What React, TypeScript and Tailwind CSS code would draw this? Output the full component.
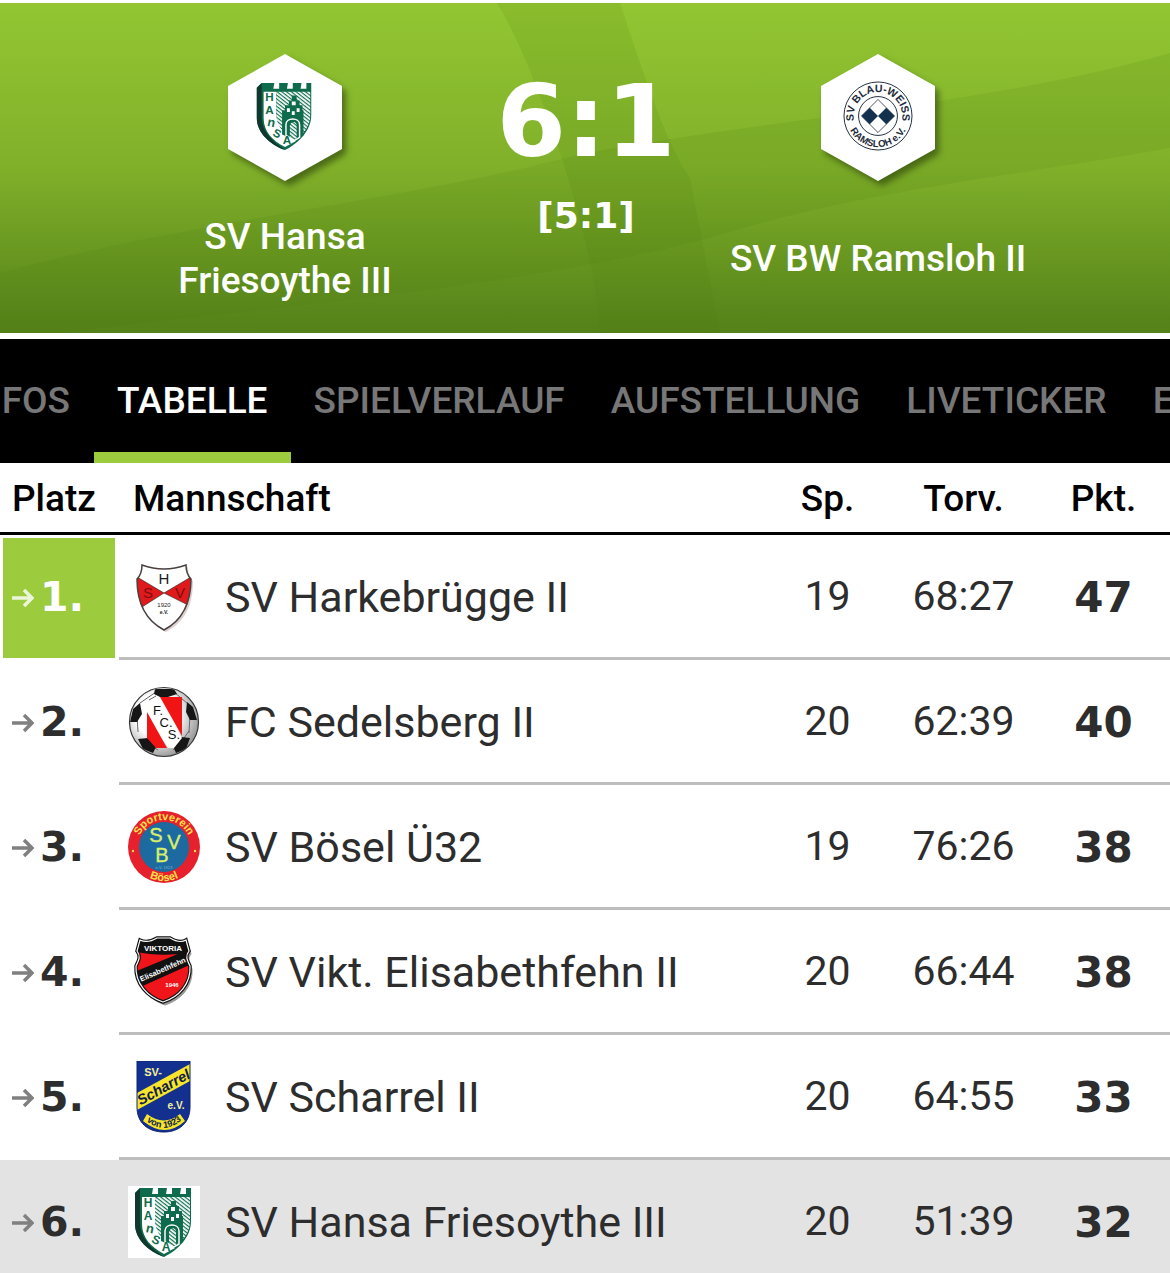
import type { ReactNode } from 'react';

type Team = {
  place: number;
  name: string;
  played: number;
  goals: string;
  points: number;
  crest: ReactNode;
};

const tabs = ['TABELLE', 'SPIELVERLAUF', 'AUFSTELLUNG', 'LIVETICKER', 'E'];

function HansaCrest({ className }: { className: string }) {
  return (
    <svg viewBox="0 0 72 72" className={className} aria-hidden>
      <defs>
        <pattern id="hatch" width="3" height="3" patternUnits="userSpaceOnUse" patternTransform="rotate(38)">
          <rect width="3" height="3" fill="#fff" />
          <rect width="3" height="1.2" fill="#12704f" />
        </pattern>
      </defs>
      <path d="M12 2H63V35C63 51 50 64 36 71C20 65 7 53 7 38V7Z" fill="#0e6b4b" />
      <path d="M7 7L12 2V38C13 54 25 63 36 71C20 65 7 53 7 38Z" fill="#10382f" />
      <path d="M14 11H27V34C28 48 38 56 47 62L36 68C23 61 14 52 14 38Z" fill="#fff" />
      <path d="M27 11H62V35C62 47 54 56 46 61C34 54 27 46 27 34Z" fill="url(#hatch)" />
      <path d="M33 55V30H36V25H40V20H43V15H48V20H51V25H54V30H55V56L47 61Z" fill="#0e6b4b" />
      <path d="M37 56V45C37 37 51 37 51 45V58L46 61Z" fill="#0e6b4b" stroke="#fff" strokeWidth="1.5" />
      <path d="M41 57V46C42 41 48 41 48 46V59L46 60Z" fill="url(#hatch)" />
      <g fill="#fff">
        <path d="M25 2H30V8H24ZM39 2H44V8H38ZM53 2H58V8H52Z" />
        <path d="M43 21H47V25H43ZM38 28H41V32H38ZM48 28H51V32H48ZM43 31H46V35H43Z" />
      </g>
      <g fill="#0e6b4b" fontFamily="Liberation Sans" fontWeight="700" fontSize="12" textAnchor="middle">
        <text x="20" y="21">H</text>
        <text x="20" y="34">A</text>
        <text x="22" y="47" fontSize="13" transform="rotate(12 22 43)">n</text>
        <text x="28" y="58" transform="rotate(24 28 54)">S</text>
        <text x="38" y="65">A</text>
      </g>
    </svg>
  );
}

function RamslohCrest({ className }: { className: string }) {
  return (
    <svg viewBox="0 0 72 72" className={className} aria-hidden>
      <defs>
        <path id="ramslohTop" d="M12.5 45A25 25 0 1 1 59.5 45" />
        <path id="ramslohBottom" d="M4 36A32 32 0 0 0 68 36" />
      </defs>
      <g fill="none" stroke="#1d2b3c">
        <circle cx="36" cy="36" r="35" />
        <circle cx="36" cy="36" r="20" />
      </g>
      <path d="M36 19L53 36L36 53L19 36Z" fill="#fff" stroke="#1d2b3c" strokeWidth="0.8" />
      <path d="M27.5 27.5L36 36L27.5 44.5L19 36ZM44.5 27.5L53 36L44.5 44.5L36 36Z" fill="#14304f" />
      <g fill="#1d2b3c" fontFamily="Liberation Sans" fontWeight="700" textAnchor="middle">
        <text fontSize="11">
          <textPath href="#ramslohTop" startOffset="50%">SV BLAU-WEISS</textPath>
        </text>
        <text fontSize="10">
          <textPath href="#ramslohBottom" startOffset="50%">RAMSLOH e.V.</textPath>
        </text>
      </g>
    </svg>
  );
}

function HarkebrueggeCrest() {
  return (
    <svg viewBox="0 0 72 72" className="size-18" aria-hidden>
      <defs>
        <clipPath id="hsvShield">
          <path d="M14 4C28 9 44 9 58 4C58 10 60 15 63 18C63 45 53 60 36 69C19 60 9 45 9 18C12 15 14 10 14 4Z" />
        </clipPath>
      </defs>
      <path d="M17 6C30 11 45 11 60 6C60 12 62 17 65 20C65 47 55 62 38 71C21 62 11 47 11 20Z" fill="#ddd0d0" />
      <g clipPath="url(#hsvShield)">
        <rect width="72" height="72" fill="#fff" />
        <path d="M9 16L36 32L63 16V43H58L36 32L14 46L9 43Z" fill="#e0191c" stroke="#222" strokeWidth="0.6" />
      </g>
      <path
        d="M14 4C28 9 44 9 58 4C58 10 60 15 63 18C63 45 53 60 36 69C19 60 9 45 9 18C12 15 14 10 14 4Z"
        fill="none"
        stroke="#4a4040"
        strokeWidth="1.5"
      />
      <g fill="#1c1c1c" fontFamily="Liberation Sans" textAnchor="middle">
        <text x="36" y="23" fontSize="15">H</text>
        <text x="20" y="37" fontSize="15" fill="#7c0f10">S</text>
        <text x="52" y="37" fontSize="15" fill="#7c0f10">V</text>
        <text x="36" y="46" fontSize="6">1920</text>
        <text x="36" y="53" fontSize="5" fontWeight="700">e.V.</text>
      </g>
    </svg>
  );
}

function SedelsbergCrest() {
  return (
    <svg viewBox="0 0 72 72" className="size-18" aria-hidden>
      <defs>
        <radialGradient id="ball" cx="40%" cy="40%" r="62%">
          <stop offset="0.5" stopColor="#fff" />
          <stop offset="1" stopColor="#9a9a9a" />
        </radialGradient>
        <clipPath id="ballClip">
          <circle cx="36" cy="36" r="34" />
        </clipPath>
      </defs>
      <circle cx="36" cy="36" r="34.5" fill="url(#ball)" stroke="#333" strokeWidth="1.2" />
      <g clipPath="url(#ballClip)">
        <path
          d="M28 6L12 17M46 6L60 18M9 29L10 46M62 30L61 47M18 57L30 64M45 64L56 57M28 10L21 14M61 45L56 52"
          fill="none"
          stroke="#666"
        />
        <path
          d="M27 3L46 3L49 8L40 11H32L26 8ZM59 16L65 21L69 34L62 34L58 26ZM12 17L5 23L2 36L9 36L14 28ZM10 53L20 52L28 61L25 67L15 63ZM62 52L53 51L45 60L48 67L58 63Z"
          fill="#161616"
        />
      </g>
      <path d="M19 20L29 11L54 52L46 62H40L19 24Z" fill="#fff" />
      <path d="M32 11H54V50ZM19 26L39 62H28L19 52Z" fill="#f01414" />
      <g fill="#111" fontFamily="Liberation Sans" fontSize="13" textAnchor="middle">
        <text x="30" y="29">F.</text>
        <text x="38" y="41">C.</text>
        <text x="46" y="53">S.</text>
      </g>
    </svg>
  );
}

function BoeselCrest() {
  return (
    <svg viewBox="0 0 72 72" className="size-18" aria-hidden>
      <defs>
        <path id="boeselTop" d="M9 36A27 27 0 0 1 63 36" />
        <path id="boeselBottom" d="M2 36A34 34 0 0 0 70 36" />
      </defs>
      <circle cx="36" cy="36" r="36" fill="#e6202c" />
      <circle cx="36" cy="36" r="25" fill="#1c6aa0" />
      <g fill="#fde04a" fontFamily="Liberation Sans" fontWeight="700" fontSize="11" textAnchor="middle">
        <text>
          <textPath href="#boeselTop" startOffset="50%">Sportverein</textPath>
        </text>
        <text>
          <textPath href="#boeselBottom" startOffset="50%">Bösel</textPath>
        </text>
      </g>
      <g fill="#d9ef6a" stroke="#d9ef6a" strokeWidth="0.4" fontFamily="Liberation Sans" fontSize="20" textAnchor="middle">
        <text x="28" y="31">S</text>
        <text x="46" y="38">V</text>
        <text x="34" y="51">B</text>
      </g>
      <text x="36" y="58" fontSize="4" fontFamily="Liberation Sans" textAnchor="middle" fill="#7fb2c4">e.V. 1923</text>
      <circle cx="5" cy="40" r="1.2" fill="#fde04a" />
      <circle cx="67" cy="40" r="1.2" fill="#fde04a" />
    </svg>
  );
}

function ElisabethfehnCrest() {
  const shield = 'M12 4C18 7 24 5 29 2H42C47 5 53 7 58 4L61 15C57 20 59 24 62 30C63 48 51 61 35 66C20 61 7 48 8 30C11 24 13 20 9 15Z';
  return (
    <svg viewBox="0 0 72 72" className="size-18" aria-hidden>
      <defs>
        <clipPath id="viktoriaShield">
          <path d={shield} />
        </clipPath>
      </defs>
      <path d={shield} fill="#999" stroke="#999" transform="translate(2 3)" />
      <g clipPath="url(#viktoriaShield)">
        <rect width="72" height="72" fill="#f0141b" />
        <path d="M5 0H67V15C50 20 22 20 5 15Z" fill="#111" />
        <path d="M4 37L45 20L66 10V27L6 54Z" fill="#111" />
      </g>
      <path d={shield} fill="none" stroke="#111" strokeWidth="3.5" />
      <path d={shield} fill="none" stroke="#fff" strokeWidth="1.2" />
      <g fill="#fff" fontFamily="Liberation Sans" fontWeight="700" textAnchor="middle">
        <text x="35" y="15" fontSize="8">VIKTORIA</text>
        <text x="35" y="36" fontSize="7.5" transform="rotate(-24 35 34)">Elisabethfehn</text>
        <text x="44" y="51" fontSize="6">1946</text>
      </g>
    </svg>
  );
}

function ScharrelCrest() {
  return (
    <svg viewBox="0 0 72 72" className="size-18" aria-hidden>
      <defs>
        <path id="scharrelBand" d="M16 58Q36 76 56 57" />
        <clipPath id="scharrelShield">
          <path d="M9 0H62V46C62 62 51 71 36 71C20 71 9 62 9 46Z" />
        </clipPath>
      </defs>
      <g clipPath="url(#scharrelShield)">
        <rect width="72" height="72" fill="#14308f" />
        <path d="M9 32L62 3V20L9 49Z" fill="#f6e52a" />
        <path d="M19 53Q36 66 52 53L57 60Q37 78 15 60Z" fill="#f6e52a" />
      </g>
      <path d="M9 0H62V46C62 62 51 71 36 71C20 71 9 62 9 46Z" fill="none" stroke="#0d2470" />
      <g fontFamily="Liberation Sans" fontWeight="700" textAnchor="middle">
        <text x="25" y="15" fontSize="11" fill="#f6f29a">SV-</text>
        <text x="48" y="48" fontSize="10" fill="#f6f29a">e.V.</text>
        <text x="36" y="31" fontSize="14.5" fontStyle="italic" fill="#101c4a" transform="rotate(-29 36 27)">Scharrel</text>
        <text fontSize="9" fill="#101c4a">
          <textPath href="#scharrelBand" startOffset="50%">von 1923</textPath>
        </text>
      </g>
    </svg>
  );
}

const teams: Team[] = [
  { place: 1, name: 'SV Harkebrügge II', played: 19, goals: '68:27', points: 47, crest: <HarkebrueggeCrest /> },
  { place: 2, name: 'FC Sedelsberg II', played: 20, goals: '62:39', points: 40, crest: <SedelsbergCrest /> },
  { place: 3, name: 'SV Bösel Ü32', played: 19, goals: '76:26', points: 38, crest: <BoeselCrest /> },
  { place: 4, name: 'SV Vikt. Elisabethfehn II', played: 20, goals: '66:44', points: 38, crest: <ElisabethfehnCrest /> },
  { place: 5, name: 'SV Scharrel II', played: 20, goals: '64:55', points: 33, crest: <ScharrelCrest /> },
  { place: 6, name: 'SV Hansa Friesoythe III', played: 20, goals: '51:39', points: 32, crest: <HansaCrest className="size-18 bg-white" /> },
];

function TrendArrow({ className }: { className: string }) {
  return (
    <svg viewBox="0 0 22 20" className={`h-5 w-[22px] shrink-0 ${className}`} fill="none" stroke="currentColor" strokeWidth="3.5" aria-hidden>
      <path d="M0 10H20M12 2L20 10L12 18" />
    </svg>
  );
}

function HexTeam({ crest, children }: { crest: ReactNode; children: ReactNode }) {
  return (
    <div className="flex flex-col items-center">
      <div className="grid place-items-center">
        <svg
          viewBox="0 0 114 127"
          className="h-[127px] w-[114px] drop-shadow-[4px_5px_3px_rgba(40,60,10,0.6)] [grid-area:1/1]"
          aria-hidden
        >
          <path d="M57 0L114 32V95L57 127L0 95V32Z" fill="#fff" />
        </svg>
        <div className="relative pb-1 [grid-area:1/1]">{crest}</div>
      </div>
      <h2 className="mt-[34px] flex h-[88px] items-center whitespace-nowrap text-center text-[37px] leading-[44px] font-medium">
        {children}
      </h2>
    </div>
  );
}

function MatchHeader() {
  return (
    <header className="relative mt-[3px] bg-linear-to-b from-[#93c632] via-[#80b02a] to-[#548119] text-white">
      <svg viewBox="0 0 1170 330" preserveAspectRatio="none" className="absolute inset-0 size-full" aria-hidden>
        <path d="M497 0H620C640 60 665 140 690 175L720 330H600C598 250 540 70 497 0Z" fill="#4f7a10" opacity="0.13" />
        <path d="M0 270C200 215 400 200 585 150C780 115 1000 100 1170 50V145C1000 175 850 190 710 235C500 290 200 310 60 330H0Z" fill="#4f7a10" opacity="0.13" />
      </svg>
      <div className="relative grid grid-cols-[minmax(0,300fr)_minmax(0,302fr)_minmax(0,282fr)] pt-[51px] pr-[151px] pb-[30px] pl-[135px]">
        <HexTeam crest={<HansaCrest className="size-[70px]" />}>
          <span>
            SV Hansa
            <br />
            Friesoythe III
          </span>
        </HexTeam>
        <div className="flex flex-col items-center pt-5 font-['DejaVu_Sans',sans-serif] font-bold">
          <p className="text-[100px] leading-[96px]">6:1</p>
          <p className="mt-[22px] text-[36px] leading-[48px]">[5:1]</p>
        </div>
        <HexTeam crest={<RamslohCrest className="size-[70px]" />}>
          <span>SV BW Ramsloh II</span>
        </HexTeam>
      </div>
    </header>
  );
}

function TabBar() {
  return (
    <nav className="mt-1.5 flex h-[124px] overflow-hidden bg-black text-[37px] font-medium text-[#777]">
      <button type="button" className="flex w-[94px] shrink-0 items-center justify-end overflow-hidden pr-6">
        INFOS
      </button>
      {tabs.map((tab) => (
        <button
          key={tab}
          type="button"
          className={`shrink-0 border-y-[11px] border-t-transparent px-[23px] ${
            tab === 'TABELLE' ? 'border-b-[#9ccc3d] text-white' : 'border-b-transparent'
          }`}
        >
          {tab}
        </button>
      ))}
    </nav>
  );
}

function StandingsTable() {
  return (
    <table className="w-full table-fixed border-separate border-spacing-0 text-[#2d2d2d]">
      <thead>
        <tr className="h-[72px] text-[37px] leading-[44px] text-black *:border-b-[3px] *:border-black *:p-0 *:pt-0.5 *:font-medium">
          <th className="w-[119px] text-left">
            <span className="pl-3">Platz</span>
          </th>
          <th className="text-left">
            <span className="pl-3.5">Mannschaft</span>
          </th>
          <th className="w-[125px]">Sp.</th>
          <th className="w-[147px]">Torv.</th>
          <th className="w-[133px]">Pkt.</th>
        </tr>
      </thead>
      <tbody>
        {teams.map((team) => {
          const leader = team.place === 1;
          return (
            <tr
              key={team.place}
              className={`h-[125px] text-center text-[41px] *:p-0 *:not-first:border-b-[3px] *:not-first:border-[#bdbdbd] *:not-first:pt-0.5 ${
                team.place === 6 ? 'bg-[#e3e3e3]' : ''
              }`}
            >
              <td>
                <div
                  className={`mx-[3px] flex h-[120px] w-28 items-center gap-1.5 pl-[9px] font-['DejaVu_Sans',sans-serif] font-bold ${
                    leader ? 'bg-[#9ccc3d] text-white' : ''
                  }`}
                >
                  <TrendArrow className={leader ? 'text-white/80' : 'text-[#808080]'} />
                  {team.place}.
                </div>
              </td>
              <td>
                <div className="flex items-center gap-[25px] pl-[9px] text-[43px] whitespace-nowrap">
                  {team.crest}
                  {team.name}
                </div>
              </td>
              <td>{team.played}</td>
              <td>{team.goals}</td>
              <td className="font-['DejaVu_Sans',sans-serif] text-[42px] font-bold">{team.points}</td>
            </tr>
          );
        })}
      </tbody>
    </table>
  );
}

export default function App() {
  return (
    <main className="h-screen overflow-hidden bg-white font-[Roboto,sans-serif]">
      <MatchHeader />
      <TabBar />
      <StandingsTable />
    </main>
  );
}
